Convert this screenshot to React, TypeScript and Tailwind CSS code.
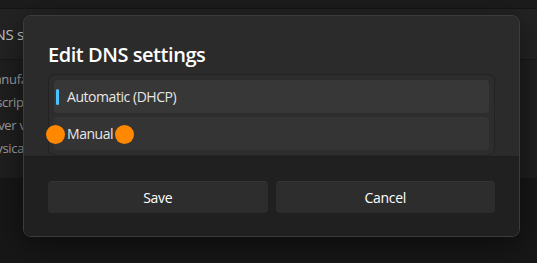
const rows = ["Manufacturer", "Description", "Driver version", "Physical address"];
const offsets = ["ml-[-17px]", "ml-[-20px]", "ml-[-19px]", "ml-[-19px]"];

function Dialog() {
  return (
    <div className="absolute left-[23px] top-[15px] flex h-[222px] w-[497px] flex-col overflow-hidden rounded-[8px] border border-[#3c3c3c] shadow-[0_8px_32px_rgba(0,0,0,0.5)]">
      <div className="flex h-[140px] flex-col bg-[#2b2b2b] px-6 pt-[25px]">
        <h2 className="text-[20px] font-semibold leading-[28px] tracking-[-0.45px] text-white">Edit DNS settings</h2>
        <div className="relative mt-[5px] flex h-[82px] flex-col gap-[4px] rounded-[7px] border border-[#232323] bg-[#2d2d2d] px-[5px] pt-[5px]">
          <div className="relative flex h-[33px] items-center rounded-[4px] bg-[#373737] pl-[13px] text-[14px] tracking-[-0.45px] text-[#e6e6e6]">
            <span className="absolute left-[2px] top-[9px] h-[16px] w-[3px] rounded-full bg-[#4cc2ff]" />
            Automatic (DHCP)
          </div>
          <div className="flex h-[33px] items-center rounded-[4px] bg-[#343434] pl-[13px] text-[14px] tracking-[-0.45px] text-[#e6e6e6]">
            Manual
          </div>
          <span className="absolute left-[-3px] top-[50px] h-[19px] w-[19px] rounded-full bg-[#ff8800]" />
          <span className="absolute left-[66px] top-[50px] h-[19px] w-[19px] rounded-full bg-[#ff8800]" />
        </div>
      </div>
      <div className="flex flex-1 gap-2 border-t border-[#1d1d1d] bg-[#202020] px-6 pt-[24px]">
        <button className="h-[32px] flex-1 rounded-[4px] border-t border-[#353535] bg-[#2d2d2d] text-[14px] tracking-[-0.3px] text-white">Save</button>
        <button className="h-[32px] flex-1 rounded-[4px] border-t border-[#353535] bg-[#2d2d2d] text-[14px] tracking-[-0.3px] text-white">Cancel</button>
      </div>
    </div>
  );
}

export default function App() {
  return (
    <div className="relative h-[263px] w-[537px] overflow-hidden bg-[#171717] font-['Open_Sans',sans-serif]">
      <div className="flex flex-col">
        <div className="h-[9px] border-b border-[#151515] bg-[#1c1c1c]" />
        <div className="flex h-[51px] items-center border-b border-[#191919] bg-[#232323]">
          <span className="ml-[-16px] text-[15px] tracking-[-0.3px] text-[#c8c8c8]">DNS settings</span>
        </div>
        <div className="flex h-[118px] flex-col bg-[#1f1f1f] pt-[8px]">
          {rows.map((r, i) => (
            <div key={r} className="flex h-[23px] items-center">
              <span className={`text-[13px] tracking-[-0.3px] text-[#a0a0a0] ${offsets[i]}`}>{r}</span>
            </div>
          ))}
        </div>
      </div>
      <Dialog />
    </div>
  );
}
